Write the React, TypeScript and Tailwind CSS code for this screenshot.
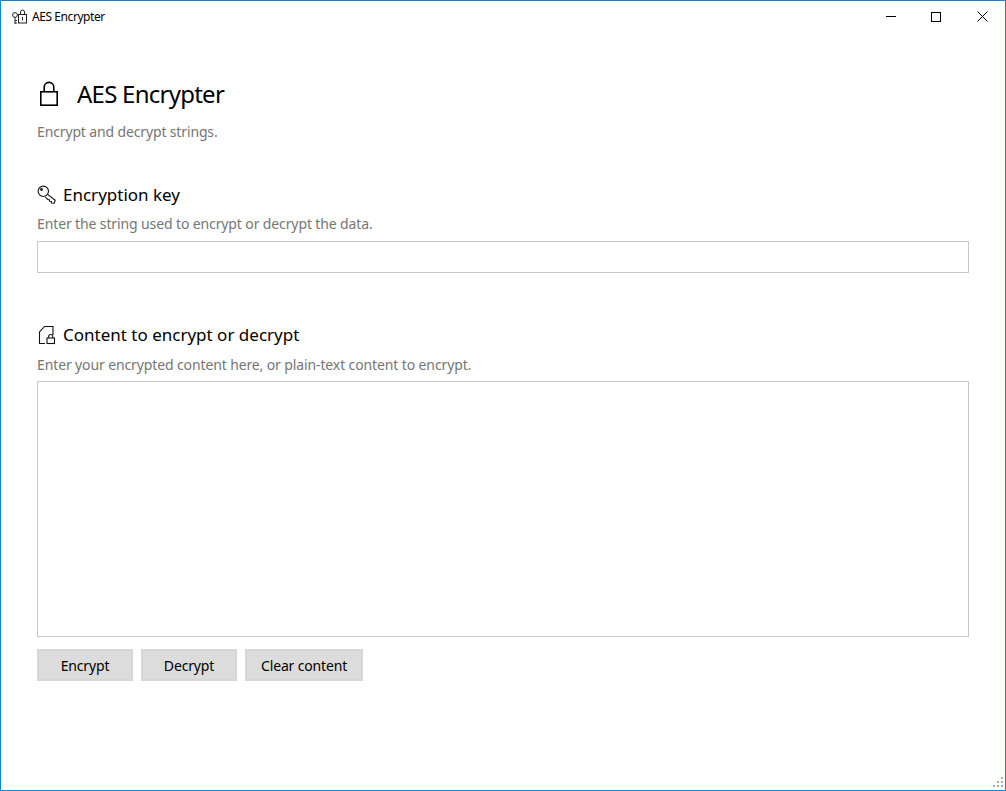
import React from "react";

const font = "font-['Noto_Sans','Open_Sans',sans-serif]";

// Small glyphs drawn after the Segoe MDL2 ones in the picture
const LockIcon = () => (
  <svg width="20" height="26" viewBox="0 0 20 26" fill="none" stroke="#000" strokeWidth="1.6">
    <rect x="1.8" y="10.8" width="16.4" height="13.4" />
    <path d="M5.2 10.8V6.2a4.8 4.8 0 0 1 9.6 0v4.6" />
  </svg>
);

const KeyIcon = () => (
  <svg width="20" height="20" viewBox="0 0 20 20" fill="none" stroke="#111" strokeWidth="1.1">
    <circle cx="6.3" cy="6.3" r="5.2" />
    <circle cx="4.5" cy="4.5" r="0.9" />
    <path d="M10.6 9.4l7.6 5.8-1 3-2.7-.2-.2-1.6-1.6-.2-.2-1.5-1.5-.1-2.6-2.5" />
  </svg>
);

const DocLockIcon = () => (
  <svg width="20" height="20" viewBox="0 0 20 20" fill="none" stroke="#111" strokeWidth="1.1">
    <path d="M8 18.5H2.5V7l5-5.5h8.5V10" />
    <rect x="10" y="13" width="7.5" height="5.5" />
    <path d="M11.7 13v-1.5a2 2 0 0 1 4 0V13" />
  </svg>
);

const AppIcon = () => (
  <svg width="16" height="16" viewBox="0 0 16 16" fill="none" stroke="#222" strokeWidth="1">
    <circle cx="3" cy="6" r="2.4" />
    <path d="M3 8.4V15M3 11.5h2M3 14h2" />
    <rect x="6.5" y="5.5" width="8" height="8.5" />
    <path d="M8.5 5.5V3a2 2 0 0 1 4 0v2.5" />
    <path d="M10.5 8v3.5" />
  </svg>
);

const SectionHead = ({
  icon,
  title,
  hint,
  hintGap,
}: {
  icon: React.ReactNode;
  title: string;
  hint: string;
  hintGap: string;
}) => (
  <div>
    <div className="flex h-7 items-center">
      <span className="flex w-[26px] items-center">{icon}</span>
      <span className="text-[17px] text-black">{title}</span>
    </div>
    <p className={`${hintGap} h-5 text-[14px] leading-5 tracking-[-0.12px] text-[#767676]`}>{hint}</p>
  </div>
);

const Btn = ({ label }: { label: string }) => (
  <button className="h-8 min-w-24 border-2 border-[#d6d6d6] bg-[#dcdcdc] px-[14px] text-[14px] tracking-[-0.16px] text-black">
    {label}
  </button>
);

const gripDots = ["col-start-3", "col-start-2", "col-start-3", "col-start-1", "col-start-2", "col-start-3"];

export default function App() {
  return (
    <div className={`${font} relative flex h-[791px] w-[1006px] flex-col overflow-hidden border border-[#0f86d6] bg-white`}>
      {/* title bar */}
      <div className="flex h-[31px] shrink-0 items-center justify-between">
        <div className="flex items-center pl-[11px]">
          <AppIcon />
          <span className="ml-[4px] text-[12px] tracking-[-0.43px] text-black">AES Encrypter</span>
        </div>
        <div className="flex">
          <div className="flex h-[31px] w-[45px] items-center justify-center pr-px">
            <span className="h-px w-[10px] bg-black" />
          </div>
          <div className="flex h-[31px] w-[45px] items-center justify-center pr-px">
            <span className="h-[10px] w-[10px] border border-black" />
          </div>
          <div className="flex h-[31px] w-[46px] items-center justify-center">
            <svg width="11" height="11" viewBox="0 0 11 11" stroke="#000" strokeWidth="1">
              <path d="M.5.5l10 10M10.5.5l-10 10" />
            </svg>
          </div>
        </div>
      </div>

      {/* content */}
      <div className="flex flex-1 flex-col px-[36px]">
        <div className="mt-[48px] flex h-7 items-center">
          <span className="ml-[2px] flex w-[38px] items-center"><LockIcon /></span>
          <h1 className="text-[24px] font-normal tracking-[-0.75px] text-black">AES Encrypter</h1>
        </div>
        <p className="mt-[14px] h-5 text-[14px] leading-5 tracking-[-0.14px] text-[#767676]">Encrypt and decrypt strings.</p>

        <div className="mt-[39px]">
          <SectionHead icon={<KeyIcon />} title="Encryption key" hint="Enter the string used to encrypt or decrypt the data." hintGap="mt-[5px]" />
        </div>
        <input className="mt-[7px] h-8 w-full shrink-0 border border-[#c8c8c8] bg-white" />

        <div className="mt-[48px]">
          <SectionHead icon={<DocLockIcon />} title="Content to encrypt or decrypt" hint="Enter your encrypted content here, or plain-text content to encrypt." hintGap="mt-[6px]" />
        </div>
        <textarea className="mt-[6px] h-[256px] w-full shrink-0 resize-none border border-[#c8c8c8] bg-white" />

        <div className="mt-3 flex gap-2">
          <Btn label="Encrypt" />
          <Btn label="Decrypt" />
          <Btn label="Clear content" />
        </div>
      </div>

      {/* resize grip */}
      <div className="absolute bottom-[3px] right-[2px] grid grid-cols-[2px_2px_2px] gap-x-[2px] gap-y-[2px]">
        {gripDots.map((col, i) => (
          <span key={i} className={`${col} h-[2px] w-[2px] bg-[#a9a9a9]`} />
        ))}
      </div>
    </div>
  );
}
